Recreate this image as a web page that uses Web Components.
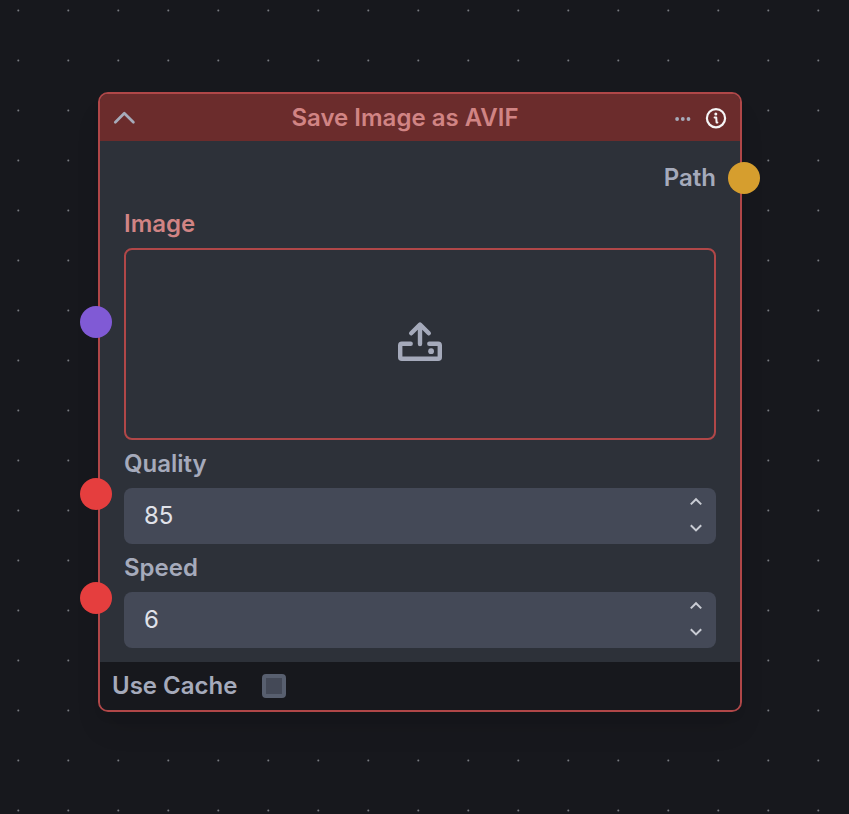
<!DOCTYPE html>
<html lang="en">
<head>
<meta charset="utf-8">
<title>Save Image as AVIF</title>
<style>
html,body{margin:0;height:100%;overflow:hidden}
body{background:#17181d;font-family:Inter,"Liberation Sans",sans-serif}
</style>
</head>
<body>
<flow-canvas>
  <flow-node heading="Save Image as AVIF">
    <node-output label="Path" color="#d69e2e"></node-output>
    <node-field label="Image" color="#805ad5" invalid><image-drop></image-drop></node-field>
    <node-field label="Quality" color="#e53e3e"><number-box value="85"></number-box></node-field>
    <node-field label="Speed" color="#e53e3e"><number-box value="6"></number-box></node-field>
    <cache-toggle slot="footer">Use Cache</cache-toggle>
  </flow-node>
</flow-canvas>
<script>
const define = (name, render) => customElements.define(name, class extends HTMLElement {
  connectedCallback() {
    if (this.shadowRoot) return;
    this.attachShadow({ mode: 'open' }).innerHTML = render(this);
  }
});

define('flow-canvas', () => `
<style>
:host{display:block;box-sizing:border-box;width:849px;height:814px;overflow:hidden;background:#17181d;position:relative}
.grid{position:absolute;inset:0;width:100%;height:100%}
.place{position:absolute;left:98px;top:92px}
</style>
<svg class="grid"><defs><pattern id="dots" x="-7" y="-15" width="50" height="50" patternUnits="userSpaceOnUse"><circle cx="25.3" cy="25.4" r="1" fill="#777a80"/></pattern></defs><rect width="100%" height="100%" fill="url(#dots)"/></svg>
<div class="place"><slot></slot></div>`);

define('flow-node', el => `
<style>
:host{display:flex;flex-direction:column;box-sizing:border-box;width:644px;height:620px;border:2px solid #b04748;border-radius:10px;background:#2d3139;box-shadow:0 20px 30px -6px rgba(0,0,0,.1),0 8px 12px -4px rgba(0,0,0,.05)}
header{height:47px;flex:none;display:grid;grid-template-columns:52px 1fr 80px;align-items:center;background:#6b2c2c;border-radius:8px 8px 0 0}
h1{margin:0;font-size:24px;line-height:32px;font-weight:600;text-align:center;color:#d18484;margin-left:-2px}
svg{display:block}
.actions{display:flex;align-items:center;justify-content:flex-end;gap:13px;padding-right:12px}
.toggle{padding-left:12px}
main{height:520.5px;flex:none;padding:.5px 24px 0;box-sizing:border-box}
footer{height:48.5px;flex:none;background:#17181d;border-radius:0 0 8px 8px}
</style>
<header>
<div class="toggle"><svg width="24" height="24" viewBox="0 0 24 24" fill="none" stroke="#a6abba" stroke-width="2.7" stroke-linecap="round" stroke-linejoin="round"><path d="M3.3 16.3 12.3 7.3 21.4 16.3"/></svg></div>
<h1>${el.getAttribute('heading')}</h1>
<div class="actions">
<svg width="18" height="24" viewBox="0 0 18 24" fill="#a6abba"><circle cx="4.1" cy="13" r="1.9"/><circle cx="9.8" cy="13" r="1.9"/><circle cx="15.5" cy="13" r="1.9"/></svg>
<svg width="24" height="24" viewBox="0 0 24 24"><circle cx="12" cy="12.2" r="9.1" fill="none" stroke="#f5f5f6" stroke-width="2.2"/><circle cx="11.8" cy="8" r="1.5" fill="#f5f5f6"/><path d="M10.6 11.4h1.6l.4 5.1h.8" fill="none" stroke="#f5f5f6" stroke-width="2" stroke-linecap="round" stroke-linejoin="round"/></svg>
</div>
</header>
<main><slot></slot></main>
<footer><slot name="footer"></slot></footer>`);

define('node-output', el => `
<style>
:host{display:flex;position:relative;height:58.5px;padding-top:14px;box-sizing:border-box;align-items:center;justify-content:flex-end;font-size:24px;font-weight:600;line-height:32px;color:#a5aabb}
i{position:absolute;right:-44px;top:20.5px;width:32px;height:32px;border-radius:50%;background:${el.getAttribute('color')}}
</style><span>${el.getAttribute('label')}</span><i></i>`);

define('node-field', el => `
<style>
:host{display:block;position:relative}
label{display:flex;align-items:center;height:48px;font-size:24px;line-height:32px;font-weight:600;color:${el.hasAttribute('invalid') ? '#d18484' : '#a5aabb'}}
i{position:absolute;left:-44px;top:calc(50% - 14px);width:32px;height:32px;border-radius:50%;background:${el.getAttribute('color')}}
</style><label>${el.getAttribute('label')}</label><slot></slot><i></i>`);

define('image-drop', () => `
<style>
:host{display:grid;place-items:center;box-sizing:border-box;height:192px;border:2px solid #b04748;border-radius:8px}
</style>
<svg width="48" height="48" viewBox="0 0 48 48" fill="none" stroke="#a5aabb" stroke-width="4.4" stroke-linecap="round" stroke-linejoin="round"><path d="M14.7 23.8H5.8a1.6 1.6 0 0 0-1.6 1.6v11.8a1.6 1.6 0 0 0 1.6 1.6h36.4a1.6 1.6 0 0 0 1.6-1.6V25.4a1.6 1.6 0 0 0-1.6-1.6h-8.9M24 24.1V5M15.2 13.3 24 4.5l8.8 8.8"/><circle cx="35.1" cy="31.2" r="2.9" fill="#a5aabb" stroke="none"/></svg>`);

define('number-box', el => `
<style>
:host{display:flex;align-items:center;justify-content:space-between;box-sizing:border-box;height:56px;padding:0 12px 0 20px;border-radius:8px;background:#444957;color:#e0e2e9;font-size:24px;line-height:32px}
svg{display:block}
</style><span>${el.getAttribute('value')}</span>
<svg width="16" height="56" viewBox="0 0 16 56" fill="none" stroke="#c9ccd4" stroke-width="2"><path d="m2.8 16.4 5.2-5.2 5.2 5.2M2.8 37.2 8 42.4l5.2-5.2"/></svg>`);

define('cache-toggle', () => `
<style>
:host{display:flex;align-items:center;height:48px;gap:25px;padding-left:12px;font-size:24px;line-height:32px;font-weight:600;color:#a5aabb}
b{box-sizing:border-box;width:24px;height:24px;border:4px solid #585f6f;border-radius:4px;background:#444957}
</style><span><slot></slot></span><b></b>`);
</script>
</body>
</html>
